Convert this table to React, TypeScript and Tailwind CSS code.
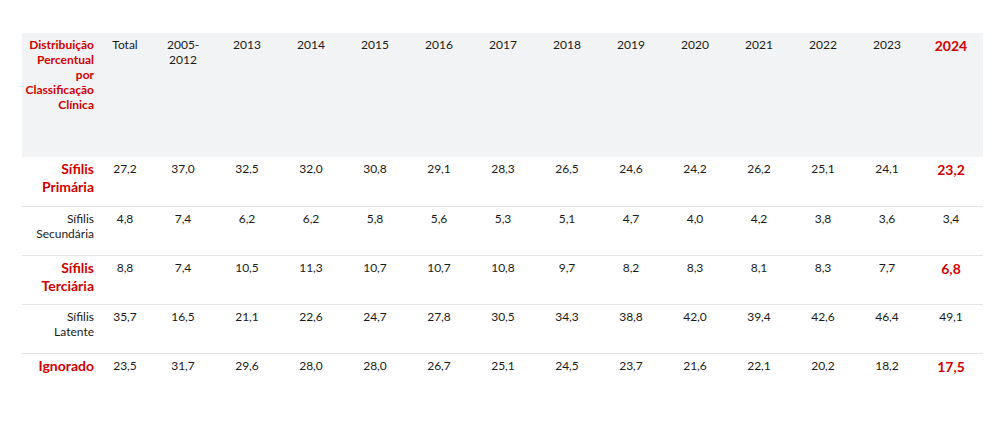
const years = ["2013", "2014", "2015", "2016", "2017", "2018", "2019", "2020", "2021", "2022", "2023"];

type Row = {
  label: [string, string];
  highlight: boolean;
  values: string[];
};

const rows: Row[] = [
  {
    label: ["Sífilis", "Primária"],
    highlight: true,
    values: ["27,2", "37,0", "32,5", "32,0", "30,8", "29,1", "28,3", "26,5", "24,6", "24,2", "26,2", "25,1", "24,1", "23,2"],
  },
  {
    label: ["Sífilis", "Secundária"],
    highlight: false,
    values: ["4,8", "7,4", "6,2", "6,2", "5,8", "5,6", "5,3", "5,1", "4,7", "4,0", "4,2", "3,8", "3,6", "3,4"],
  },
  {
    label: ["Sífilis", "Terciária"],
    highlight: true,
    values: ["8,8", "7,4", "10,5", "11,3", "10,7", "10,7", "10,8", "9,7", "8,2", "8,3", "8,1", "8,3", "7,7", "6,8"],
  },
  {
    label: ["Sífilis", "Latente"],
    highlight: false,
    values: ["35,7", "16,5", "21,1", "22,6", "24,7", "27,8", "30,5", "34,3", "38,8", "42,0", "39,4", "42,6", "46,4", "49,1"],
  },
  {
    label: ["Ignorado", ""],
    highlight: true,
    values: ["23,5", "31,7", "29,6", "28,0", "28,0", "26,7", "25,1", "24,5", "23,7", "21,6", "22,1", "20,2", "18,2", "17,5"],
  },
];

const App = () => {
  return (
    <div className="w-[994px] h-[422px] bg-white pt-[33px] pl-[22px] font-['Lato','Liberation_Sans',sans-serif] text-[12px] leading-[15px] text-[#1a1a1a]">
      <table className="w-[960px] table-fixed border-collapse">
        <colgroup>
          <col className="w-[77px]" />
          <col className="w-[52px]" />
          <col className="w-[64px]" />
          {years.map((y) => (
            <col key={y} className="w-[64px]" />
          ))}
          <col className="w-[64px]" />
        </colgroup>
        <thead>
          <tr className="bg-[#f2f3f5] h-[124px] align-top">
            <th className="text-right pr-[5px] pt-[4px] font-bold text-[#d10000]">
              Distribuição Percentual por Classificação Clínica
            </th>
            <th className="text-center pt-[4px] font-normal">Total</th>
            <th className="text-center pt-[4px] font-normal px-[16px]">2005-2012</th>
            {years.map((y) => (
              <th key={y} className="text-center pt-[4px] font-normal">
                {y}
              </th>
            ))}
            <th className="text-center pt-[5px] font-bold text-[14px] text-[#d10000]">2024</th>
          </tr>
        </thead>
        <tbody>
          {rows.map((row, i) => (
            <tr key={i} className={"h-[49px] align-top " + (i > 0 ? "border-t border-[#e3e5e8]" : "")}>
              <td
                className={
                  row.highlight
                    ? "text-right pr-[5px] pt-[3px] font-bold text-[14px] leading-[18px] text-[#d10000]"
                    : "text-right pr-[5px] pt-[4px]"
                }
              >
                {row.label[0]}
                {row.label[1] && <br />}
                {row.label[1]}
              </td>
              {row.values.map((v, j) =>
                j === row.values.length - 1 && row.highlight ? (
                  <td key={j} className="text-center pt-[5px] font-bold text-[14px] text-[#d10000]">
                    {v}
                  </td>
                ) : (
                  <td key={j} className="text-center pt-[4px]">
                    {v}
                  </td>
                )
              )}
            </tr>
          ))}
        </tbody>
      </table>
    </div>
  );
};

export default App;
